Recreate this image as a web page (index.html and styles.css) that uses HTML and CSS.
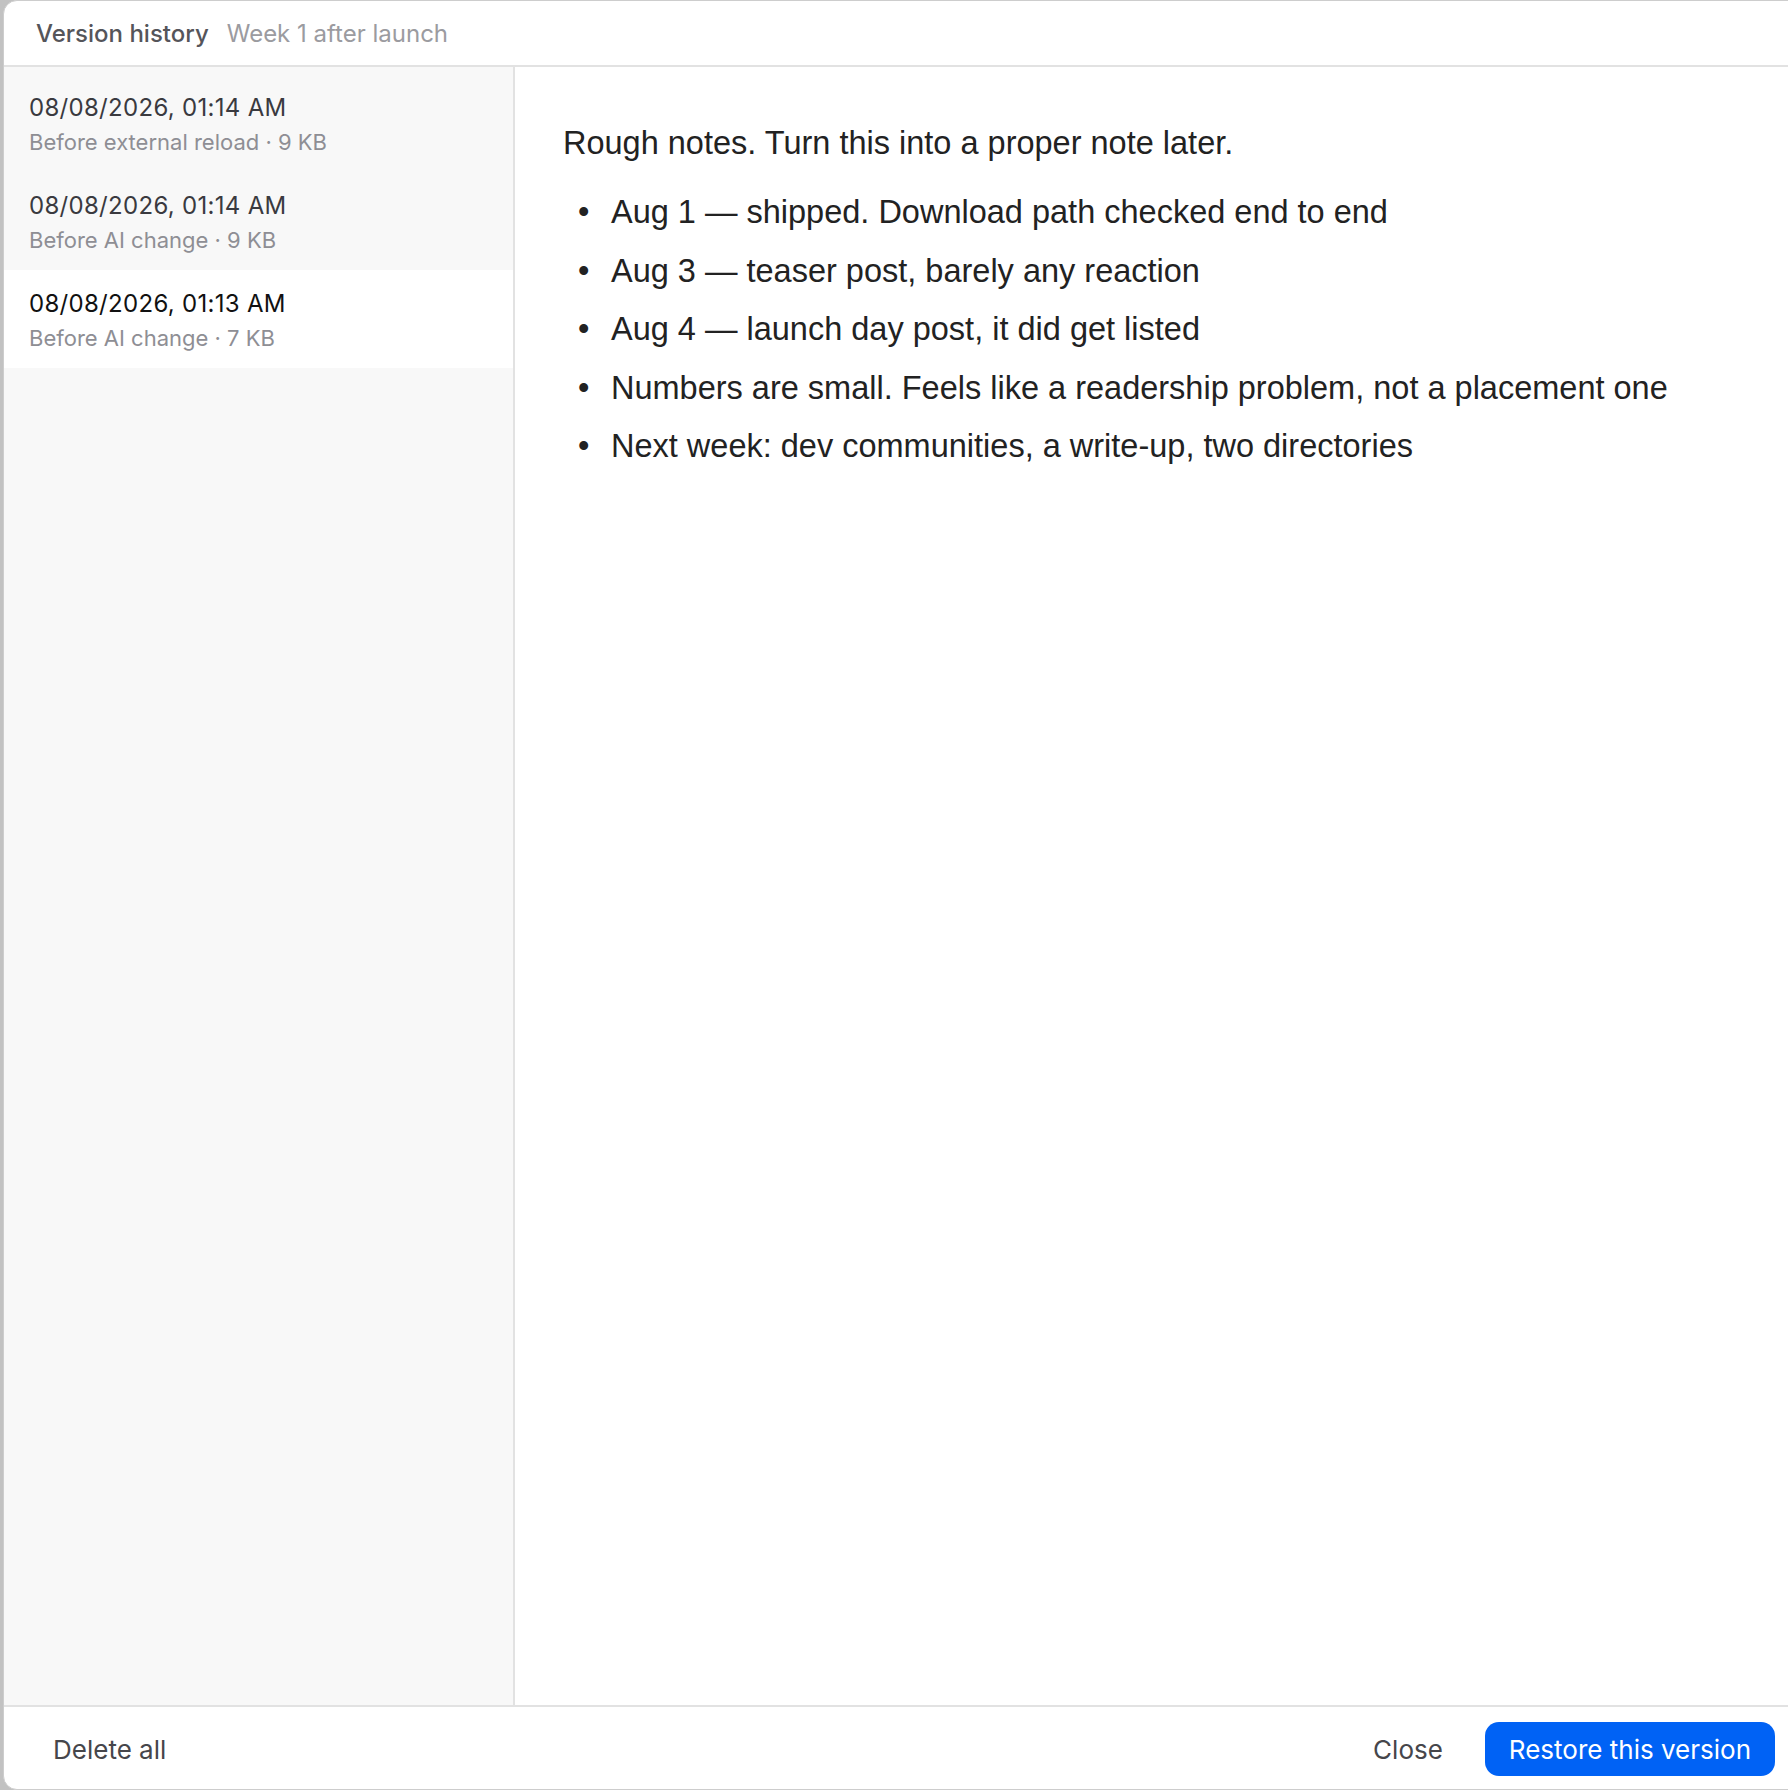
FILE: index.html
```html
<!DOCTYPE html>
<html>
<head>
<meta charset="utf-8">
<link rel="stylesheet" href="styles.css">
</head>
<body>
<div class="dialog">
  <header class="header">
    <span class="title">Version history</span>
    <span class="subtitle">Week 1 after launch</span>
  </header>
  <div class="main">
    <aside class="sidebar">
      <div class="item">
        <div class="date">08/08/2026, 01:14 AM</div>
        <div class="meta">Before external reload · 9 KB</div>
      </div>
      <div class="item">
        <div class="date">08/08/2026, 01:14 AM</div>
        <div class="meta">Before AI change · 9 KB</div>
      </div>
      <div class="item selected">
        <div class="date">08/08/2026, 01:13 AM</div>
        <div class="meta">Before AI change · 7 KB</div>
      </div>
    </aside>
    <section class="content">
      <p class="lead">Rough notes. Turn this into a proper note later.</p>
      <ul class="notes">
        <li>Aug 1 — shipped. Download path checked end to end</li>
        <li>Aug 3 — teaser post, barely any reaction</li>
        <li>Aug 4 — launch day post, it did get listed</li>
        <li>Numbers are small. Feels like a readership problem, not a placement one</li>
        <li>Next week: dev communities, a write-up, two directories</li>
      </ul>
    </section>
  </div>
  <footer class="footer">
    <button class="btn-text">Delete all</button>
    <div class="spacer"></div>
    <button class="btn-text close">Close</button>
    <button class="btn-primary">Restore this version</button>
  </footer>
</div>
</body>
</html>
```
FILE: styles.css
```css
html, body {
  margin: 0;
  padding: 0;
  height: 100%;
  overflow: hidden;
}
body {
  background: #c2c2c2;
  font-family: Inter, "Noto Sans", sans-serif;
}
.dialog {
  margin-left: 3px;
  width: 1810px;
  height: 1790px;
  box-sizing: border-box;
  border: 1px solid #cdcdcd;
  border-radius: 14px;
  background: #fff;
  overflow: hidden;
  display: flex;
  flex-direction: column;
}
.header {
  height: 64px;
  flex: none;
  border-bottom: 2px solid #e2e2e2;
  display: flex;
  align-items: center;
  padding-left: 32px;
  gap: 18px;
  font-size: 24px;
}
.title {
  color: #55555a;
  font-weight: 500;
}
.subtitle {
  color: #9b9ba0;
}
.main {
  flex: 1;
  display: flex;
  min-height: 0;
}
.sidebar {
  width: 509px;
  flex: none;
  background: #f8f8f8;
  border-right: 2px solid #e2e2e2;
  padding-top: 7px;
}
.item {
  height: 98px;
  box-sizing: border-box;
  padding: 17px 25px 0;
}
.item.selected {
  background: #fff;
}
.date {
  font-size: 24px;
  letter-spacing: 0.3px;
  line-height: 34px;
  color: #3a3a3f;
}
.selected .date {
  color: #111;
}
.meta {
  font-size: 22px;
  line-height: 34px;
  color: #8e8e94;
}
.content {
  flex: 1;
  padding: 47px 0 0 48px;
  font-family: "Liberation Sans", Arial, sans-serif;
  color: #222;
  font-size: 32.5px;
}
.lead {
  margin: 0;
  line-height: 58px;
}
.notes {
  margin: 11px 0 0;
  padding-left: 48px;
  list-style: none;
}
.notes li {
  line-height: 58.5px;
}
.notes li::before {
  content: "•";
  display: inline-block;
  width: 33px;
  margin-left: -33px;
}
.footer {
  height: 84px;
  flex: none;
  border-top: 2px solid #e2e2e2;
  display: flex;
  align-items: center;
  padding: 2px 37px 0 49px;
  box-sizing: border-box;
}
.spacer {
  flex: 1;
}
button {
  font-family: Inter, "Noto Sans", sans-serif;
  font-size: 26px;
  border: none;
  background: none;
  padding: 0;
  cursor: pointer;
}
.btn-text {
  color: #46464b;
}
.close {
  margin-right: 42px;
}
.btn-primary {
  background: #0062f5;
  color: #fff;
  height: 54px;
  padding: 0 24px;
  border-radius: 14px;
}
```
